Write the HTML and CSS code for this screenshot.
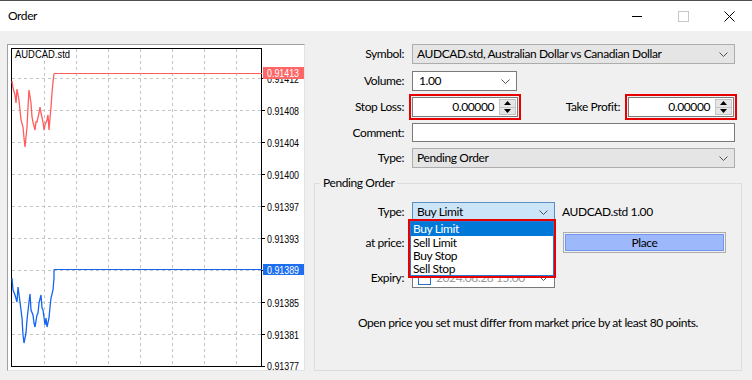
FILE: index.html
```html
<!DOCTYPE html>
<html>
<head>
<meta charset="utf-8">
<title>Order</title>
<link rel="stylesheet" href="styles.css">
</head>
<body>
<div class="titlebar">
  <span class="title">Order</span>
  <div class="caption-btns">
    <span class="cbtn"><svg width="10" height="10" viewBox="0 0 10 10"><line x1="0" y1="5.5" x2="10" y2="5.5" stroke="#000" stroke-width="1"/></svg></span>
    <span class="cbtn"><svg width="11" height="11" viewBox="0 0 11 11"><rect x="0.5" y="0.5" width="10" height="10" fill="none" stroke="#c8c8c8" stroke-width="1"/></svg></span>
    <span class="cbtn"><svg width="11" height="11" viewBox="0 0 11 11"><path d="M0.5 0.5 L10.5 10.5 M10.5 0.5 L0.5 10.5" stroke="#000" stroke-width="1" fill="none"/></svg></span>
  </div>
</div>
<div class="content">
  <div class="chart-frame">
    <svg class="chart" width="296" height="325" viewBox="8 45 296 325">
      <g class="grid" stroke="#c4c4c4" stroke-width="1" stroke-dasharray="3 3">
        <line x1="44.5" y1="49" x2="44.5" y2="366"/>
        <line x1="76.5" y1="49" x2="76.5" y2="366"/>
        <line x1="108.5" y1="49" x2="108.5" y2="366"/>
        <line x1="140.5" y1="49" x2="140.5" y2="366"/>
        <line x1="172.5" y1="49" x2="172.5" y2="366"/>
        <line x1="204.5" y1="49" x2="204.5" y2="366"/>
        <line x1="236.5" y1="49" x2="236.5" y2="366"/>
        <line x1="12" y1="78.5" x2="261" y2="78.5"/>
        <line x1="12" y1="110.5" x2="261" y2="110.5"/>
        <line x1="12" y1="142.5" x2="261" y2="142.5"/>
        <line x1="12" y1="174.5" x2="261" y2="174.5"/>
        <line x1="12" y1="206.5" x2="261" y2="206.5"/>
        <line x1="12" y1="238.5" x2="261" y2="238.5"/>
        <line x1="12" y1="270.5" x2="261" y2="270.5"/>
        <line x1="12" y1="302.5" x2="261" y2="302.5"/>
        <line x1="12" y1="334.5" x2="261" y2="334.5"/>
      </g>
      <rect x="11.5" y="48.5" width="250" height="318" fill="none" stroke="#000" stroke-width="1"/>
      <g stroke="#000" stroke-width="1">
        <line x1="262" y1="78.5" x2="265" y2="78.5"/>
        <line x1="262" y1="110.5" x2="265" y2="110.5"/>
        <line x1="262" y1="142.5" x2="265" y2="142.5"/>
        <line x1="262" y1="174.5" x2="265" y2="174.5"/>
        <line x1="262" y1="206.5" x2="265" y2="206.5"/>
        <line x1="262" y1="238.5" x2="265" y2="238.5"/>
        <line x1="262" y1="270.5" x2="265" y2="270.5"/>
        <line x1="262" y1="302.5" x2="265" y2="302.5"/>
        <line x1="262" y1="334.5" x2="265" y2="334.5"/>
        <line x1="262" y1="366.5" x2="265" y2="366.5"/>
      </g>
      <g class="axis">
        <text x="267" y="83" textLength="32" lengthAdjust="spacingAndGlyphs">0.91412</text>
        <text x="267" y="115" textLength="32" lengthAdjust="spacingAndGlyphs">0.91408</text>
        <text x="267" y="147" textLength="32" lengthAdjust="spacingAndGlyphs">0.91404</text>
        <text x="267" y="179" textLength="32" lengthAdjust="spacingAndGlyphs">0.91400</text>
        <text x="267" y="211" textLength="32" lengthAdjust="spacingAndGlyphs">0.91397</text>
        <text x="267" y="243" textLength="32" lengthAdjust="spacingAndGlyphs">0.91393</text>
        <text x="267" y="307" textLength="32" lengthAdjust="spacingAndGlyphs">0.91385</text>
        <text x="267" y="339" textLength="32" lengthAdjust="spacingAndGlyphs">0.91381</text>
        <text x="267" y="370" textLength="32" lengthAdjust="spacingAndGlyphs">0.91377</text>
      </g>
      <text class="sym" x="15" y="58" textLength="55" lengthAdjust="spacingAndGlyphs">AUDCAD.std</text>
      <polyline fill="none" stroke="#ff5c5c" stroke-width="1.3" points="12,81 13,88 15,95 16,103 17,89 19,100 20,110 21,120 23,127 24,138 25,147 26,137 27,127 28,107 29,90 31,103 32,117 33,122 35,130 36,122 37,122 39,113 40,107 41,113 43,122 44,130 45,125 47,120 48,115 49,130 51,107 52,93 53,82 54,73.5"/>
      <line x1="54" y1="73.5" x2="262" y2="73.5" stroke="#ff5c5c" stroke-width="1"/>
      <polyline fill="none" stroke="#1464f0" stroke-width="1.3" points="12,278 13,290 15,295 17,302 18,287 20,302 22,318 23,335 24,343 26,333 27,320 29,302 30,294 31,310 33,315 34,323 35,327 37,315 38,313 39,303 41,295 42,308 43,310 45,325 46,318 47,327 49,318 50,307 51,298 53,290 54,278 54,269.5"/>
      <line x1="54" y1="269.5" x2="262" y2="269.5" stroke="#1464f0" stroke-width="1"/>
      <rect x="263" y="67" width="41" height="12" fill="#ff6666"/>
      <text class="tag" x="267" y="77" textLength="32" lengthAdjust="spacingAndGlyphs">0.91413</text>
      <rect x="263" y="264" width="41" height="11" fill="#1c6fef"/>
      <text class="tag" x="267" y="273.5" textLength="32" lengthAdjust="spacingAndGlyphs">0.91389</text>
    </svg>
  </div>

  <div class="form">
    <div class="row r-symbol">
      <span class="lbl">Symbol:</span>
      <div class="combo gray wide"><span class="ctext">AUDCAD.std, Australian Dollar vs Canadian Dollar</span><svg class="chev" width="9" height="5" viewBox="0 0 9 5"><polyline points="0.5,0.5 4.5,4.5 8.5,0.5" fill="none" stroke="#505050" stroke-width="1"/></svg></div>
    </div>
    <div class="row r-volume">
      <span class="lbl">Volume:</span>
      <div class="combo white vol"><span class="ctext">1.00</span><svg class="chev" width="9" height="5" viewBox="0 0 9 5"><polyline points="0.5,0.5 4.5,4.5 8.5,0.5" fill="none" stroke="#505050" stroke-width="1"/></svg></div>
    </div>
    <div class="row r-sl">
      <span class="lbl">Stop Loss:</span>
      <div class="hl">
        <div class="spin-input"><span class="num">0.00000</span>
          <div class="spinner"><span class="sbtn"><svg width="7" height="4" viewBox="0 0 7 4"><polygon points="3.5,0 7,4 0,4" fill="#000"/></svg></span><span class="sbtn"><svg width="7" height="4" viewBox="0 0 7 4"><polygon points="0,0 7,0 3.5,4" fill="#000"/></svg></span></div>
        </div>
      </div>
      <span class="lbl tp">Take Profit:</span>
      <div class="hl">
        <div class="spin-input"><span class="num">0.00000</span>
          <div class="spinner"><span class="sbtn"><svg width="7" height="4" viewBox="0 0 7 4"><polygon points="3.5,0 7,4 0,4" fill="#000"/></svg></span><span class="sbtn"><svg width="7" height="4" viewBox="0 0 7 4"><polygon points="0,0 7,0 3.5,4" fill="#000"/></svg></span></div>
        </div>
      </div>
    </div>
    <div class="row r-comment">
      <span class="lbl">Comment:</span>
      <div class="textbox wide"></div>
    </div>
    <div class="row r-type">
      <span class="lbl">Type:</span>
      <div class="combo gray wide"><span class="ctext">Pending Order</span><svg class="chev" width="9" height="5" viewBox="0 0 9 5"><polyline points="0.5,0.5 4.5,4.5 8.5,0.5" fill="none" stroke="#505050" stroke-width="1"/></svg></div>
    </div>

    <div class="group">
      <span class="legend">Pending Order</span>
      <div class="row g-type">
        <span class="lbl glbl">Type:</span>
        <div class="combo open mid"><span class="ctext">Buy Limit</span><svg class="chev" width="9" height="5" viewBox="0 0 9 5"><polyline points="0.5,0.5 4.5,4.5 8.5,0.5" fill="none" stroke="#505050" stroke-width="1"/></svg></div>
        <span class="info">AUDCAD.std 1.00</span>
      </div>
      <div class="row g-price">
        <span class="lbl glbl">at price:</span>
        <div class="textbox mid"></div>
        <div class="place"><div class="place-inner">Place</div></div>
      </div>
      <div class="row g-expiry">
        <span class="lbl glbl">Expiry:</span>
        <div class="textbox mid dtp"><span class="chk"></span><span class="dtext">2024.08.28 15:00</span><svg class="chev" width="9" height="5" viewBox="0 0 9 5"><polyline points="0.5,0.5 4.5,4.5 8.5,0.5" fill="none" stroke="#505050" stroke-width="1"/></svg></div>
      </div>
      <p class="msg">Open price you set must differ from market price by at least 80 points.</p>

      <div class="dropdown">
        <ul class="list">
          <li class="sel">Buy Limit</li>
          <li>Sell Limit</li>
          <li>Buy Stop</li>
          <li>Sell Stop</li>
        </ul>
      </div>
    </div>
  </div>
</div>
</body>
</html>
```

FILE: styles.css
```css
* { box-sizing: border-box; margin: 0; padding: 0; }
html, body { width: 752px; height: 380px; overflow: hidden; }
body {
  margin: 0;
  background: #f0f0f0;
  font-family: Lato, "Liberation Sans", sans-serif;
  font-size: 12px;
  letter-spacing: -0.4px;
  color: #000;
}

.titlebar {
  height: 31px;
  border-top: 1px solid #4f4f4f;
  background: #fff;
  display: flex;
  align-items: center;
  justify-content: space-between;
}
.title { padding-left: 8px; line-height: 16px; }
.caption-btns { display: flex; height: 30px; }
.cbtn { width: 46px; display: flex; align-items: center; justify-content: center; }
.cbtn svg { display: block; }

.content { display: flex; padding-top: 13px; }

.chart-frame {
  margin-left: 7px;
  width: 298px;
  height: 327px;
  border: 1px solid;
  border-color: #a0a0a0 #e3e3e3 #e3e3e3 #a0a0a0;
  background: #fff;
}
.chart { display: block; letter-spacing: 0; }
.axis text { font-family: "Liberation Sans", sans-serif; font-size: 11px; fill: #000; }
.sym { font-family: "Liberation Sans", sans-serif; font-size: 11px; fill: #000; }
.tag { font-family: "Liberation Sans", sans-serif; font-size: 11px; fill: #fff; }

.form { width: 447px; display: flex; flex-direction: column; }

.row { display: flex; align-items: center; height: 20px; flex: none; }
.r-volume { margin-top: 7px; }
.r-sl { margin-top: 6px; }
.r-comment { margin-top: 6px; height: 19px; }
.r-type { margin-top: 6px; }

.lbl { width: 99px; text-align: right; margin-right: 8px; flex: none; line-height: 16px; }
.lbl.tp { width: 102px; }
.glbl { width: 89px; }

.combo {
  height: 20px;
  display: flex;
  align-items: center;
  justify-content: space-between;
  border: 1px solid #adadad;
  padding: 0 6px 0 4px;
  flex: none;
}
.combo .ctext { line-height: 16px; white-space: nowrap; }
.chev { display: block; flex: none; }
.combo.gray { background: #e5e5e5; }
.combo.white { background: #fff; border-color: #7a7a7a; padding-left: 6px; }
.combo.open { background: #cce4f7; border-color: #5a8fc4; padding-left: 4px; }
.wide { width: 323px; }
.vol { width: 105px; }
.mid { width: 143px; }

.textbox { height: 100%; background: #fff; border: 1px solid #7a7a7a; flex: none; }
.textbox.wide { height: 19px; }
.textbox.mid { height: 20px; }

.hl {
  border: 2px solid #e60000;
  padding: 1px;
  margin: -3px;
  flex: none;
}
.spin-input {
  width: 106px;
  height: 20px;
  background: #fff;
  border: 1px solid #7a7a7a;
  display: flex;
  align-items: center;
  justify-content: flex-end;
  padding: 1px;
}
.num { line-height: 16px; margin-right: 5px; }
.spinner {
  width: 17px;
  height: 16px;
  display: flex;
  flex-direction: column;
  border: 1px solid #c4c4c4;
  background: #e6e6e6;
}
.sbtn { flex: 1; display: flex; align-items: center; justify-content: center; }
.sbtn + .sbtn { border-top: 1px solid #c4c4c4; }
.sbtn svg { display: block; }

.group {
  position: relative;
  margin: 15px 10px 0 9px;
  height: 188px;
  border: 1px solid #dcdcdc;
  padding-top: 18px;
}
.legend {
  position: absolute;
  left: 5px;
  top: -9px;
  background: #f0f0f0;
  padding: 0 3px;
  line-height: 16px;
}
.g-price { margin-top: 10px; height: 21px; }
.g-price .textbox { height: 20px; }
.g-expiry { margin-top: 15px; }
.info { margin-left: 7px; line-height: 16px; }

.place {
  margin-left: 8px;
  width: 163px;
  height: 21px;
  border: 1px solid #adadad;
  padding: 1px;
  background: #f0f0f0;
}
.place-inner {
  height: 100%;
  background: #9db9fb;
  border: 1px solid #7296ef;
  display: flex;
  align-items: center;
  justify-content: center;
}

.dtp { display: flex; align-items: center; padding: 0 6px 0 5px; }
.chk { width: 13px; height: 13px; border: 1px solid #2b6cc4; background: #fff; flex: none; }
.dtext { margin-left: 5px; color: #9a9a9a; flex: 1; line-height: 16px; }

.msg { margin-top: 27px; text-align: center; line-height: 16px; }

.dropdown {
  position: absolute;
  left: 93px;
  top: 35px;
  width: 148px;
  border: 2px solid #e60000;
}
.list {
  list-style: none;
  border: 1px solid #2a78cf;
  background: #fff;
}
.list li { height: 13px; line-height: 13px; padding-left: 2px; }
.list li.sel { height: 14px; line-height: 14px; background: #0078d7; color: #fff; }
```
